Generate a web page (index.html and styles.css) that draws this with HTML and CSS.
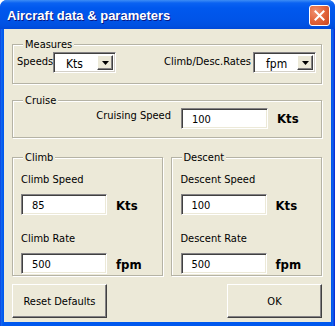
FILE: index.html
```html
<!DOCTYPE html>
<html>
<head>
<meta charset="utf-8">
<link rel="stylesheet" href="styles.css">
</head>
<body>
<div class="window">
  <div class="titlebar">
    <span class="title">Aircraft data &amp; parameters</span>
    <span class="close">
      <svg width="11" height="11" viewBox="0 0 11 11"><path d="M1.5 1.5 L9.5 9.5 M9.5 1.5 L1.5 9.5" stroke="#fff" stroke-width="2" stroke-linecap="square"/></svg>
    </span>
  </div>
  <div class="client">
    <div class="group measures">
      <span class="legend">Measures</span>
      <div class="measure-item">
        <span class="speeds-label">Speeds</span>
        <div class="combo"><span class="combo-val">Kts</span><span class="combo-btn"><svg width="7" height="4" viewBox="0 0 7 4"><path d="M0 0 H7 L3.5 4 Z" fill="#000"/></svg></span></div>
      </div>
      <div class="measure-item">
        <span class="rates-label">Climb/Desc.Rates</span>
        <div class="combo"><span class="combo-val">fpm</span><span class="combo-btn"><svg width="7" height="4" viewBox="0 0 7 4"><path d="M0 0 H7 L3.5 4 Z" fill="#000"/></svg></span></div>
      </div>
    </div>

    <div class="group cruise">
      <span class="legend">Cruise</span>
      <span class="cruise-label">Cruising Speed</span>
      <div class="field">100</div>
      <span class="unit">Kts</span>
    </div>

    <div class="pair">
      <div class="group climb">
        <span class="legend">Climb</span>
        <span class="lbl">Climb Speed</span>
        <div class="field-row"><div class="field">85</div><span class="unit">Kts</span></div>
        <span class="lbl lbl2">Climb Rate</span>
        <div class="field-row"><div class="field">500</div><span class="unit">fpm</span></div>
      </div>
      <div class="group descent">
        <span class="legend">Descent</span>
        <span class="lbl">Descent Speed</span>
        <div class="field-row"><div class="field">100</div><span class="unit">Kts</span></div>
        <span class="lbl lbl2">Descent Rate</span>
        <div class="field-row"><div class="field">500</div><span class="unit">fpm</span></div>
      </div>
    </div>

    <div class="buttons">
      <div class="btn">Reset Defaults</div>
      <div class="btn">OK</div>
    </div>
  </div>
</div>
</body>
</html>
```

FILE: styles.css
```css
* { box-sizing: border-box; }
html, body { margin: 0; padding: 0; }
body {
  width: 335px;
  height: 326px;
  overflow: hidden;
  background: #fff;
  font-family: "DejaVu Sans Condensed", "DejaVu Sans", sans-serif;
  font-stretch: condensed;
  font-size: 11px;
  color: #000;
}
.window {
  width: 335px;
  height: 326px;
  display: flex;
  flex-direction: column;
  background: linear-gradient(90deg, #0831D9 0, #166AEE 1px, #0058EE 3px, #0058EE 332px, #166AEE 333px, #0831D9 334px);
  border-radius: 7px 7px 0 0;
  overflow: hidden;
}
.titlebar {
  height: 29px;
  flex: 0 0 29px;
  display: flex;
  align-items: center;
  justify-content: space-between;
  padding: 1px 5px 0 7px;
  background: linear-gradient(#3D8DF5 0, #0A62F2 3px, #0058EE 8px, #0054E8 20px, #0050E0 26px, #0048D8 29px);
}
.title {
  color: #fff;
  font-family: "Liberation Sans", Arial, sans-serif;
  font-stretch: normal;
  font-weight: bold;
  font-size: 13px;
  letter-spacing: 0;
  text-shadow: 1px 1px 0 #0A1883;
}
.close {
  width: 21px;
  height: 21px;
  border: 1px solid #fff;
  border-radius: 3px;
  background: radial-gradient(circle at 30% 30%, #F09070 0, #E4683F 45%, #CB451D 100%);
  display: flex;
  align-items: center;
  justify-content: center;
}
.client {
  flex: 1;
  margin: 0 4px 4px 4px;
  background: #ECE9D8;
  padding: 15px 9px 0 8px;
  display: flex;
  flex-direction: column;
}
.group {
  position: relative;
  border: 1px solid #B5B3A5;
  box-shadow: 1px 1px 0 #fff, inset 1px 1px 0 #fff;
}
.legend {
  position: absolute;
  top: -7px;
  left: 10px;
  padding: 0 2px;
  line-height: 13px;
  background: #ECE9D8;
}
.measures {
  height: 40px;
  display: flex;
  justify-content: space-between;
  align-items: flex-start;
  padding: 7px 5px 0 4px;
}
.measure-item {
  display: flex;
  align-items: center;
}
.speeds-label { width: 36px; margin-top: -3px; }
.rates-label { margin-right: 2px; margin-top: -3px; }
.combo {
  width: 63px;
  height: 21px;
  display: flex;
  align-items: stretch;
  background: #fff;
  border: 1px solid;
  border-color: #848284 #fff #fff #848284;
  box-shadow: inset 1px 1px 0 #404040, inset -1px -1px 0 #D4D0C8;
  padding: 2px;
}
.combo-val {
  flex: 1;
  padding-left: 10px;
  font-size: 12px;
  line-height: 16px;
  padding-top: 1px;
}
.combo-btn {
  width: 16px;
  background: #ECE9D8;
  border: 1px solid;
  border-color: #fff #404040 #404040 #fff;
  box-shadow: inset -1px -1px 0 #848284;
  display: flex;
  align-items: center;
  justify-content: center;
}
.cruise {
  margin-top: 16px;
  height: 38px;
  display: flex;
  align-items: flex-start;
  padding-top: 7px;
}
.cruise-label {
  width: 158px;
  text-align: right;
  margin-right: 10px;
  line-height: 21px;
  margin-top: -3px;
}
.field {
  width: 86px;
  height: 21px;
  background: #fff;
  border: 1px solid;
  border-color: #848284 #fff #fff #848284;
  box-shadow: inset 1px 1px 0 #404040, inset -1px -1px 0 #ECE9D8;
  padding-left: 10px;
  line-height: 19px;
  padding-top: 1px;
}
.cruise .field { width: 87px; }
.unit {
  font-family: "DejaVu Sans", sans-serif;
  font-weight: bold;
  font-size: 13px;
  margin-left: 9px;
  line-height: 21px;
}
.pair {
  margin-top: 19px;
  display: flex;
  gap: 8px;
}
.pair .group {
  flex: 1;
  height: 119px;
  display: flex;
  flex-direction: column;
  align-items: flex-start;
  padding-top: 15px;
}
.climb { padding-left: 8px; }
.descent { padding-left: 9px; }
.lbl { line-height: 13px; }
.lbl2 { margin-top: 16px; }
.field-row {
  margin-top: 6px;
  display: flex;
  align-items: center;
}
.field-row .unit { margin-top: 3px; }
.buttons {
  margin-top: 8px;
  display: flex;
  justify-content: space-between;
}
.btn {
  width: 95px;
  height: 34px;
  display: flex;
  align-items: center;
  justify-content: center;
  background: #ECE9D8;
  border: 1px solid;
  border-color: #fff #404040 #404040 #fff;
  box-shadow: inset -1px -1px 0 #848284;
}
```
